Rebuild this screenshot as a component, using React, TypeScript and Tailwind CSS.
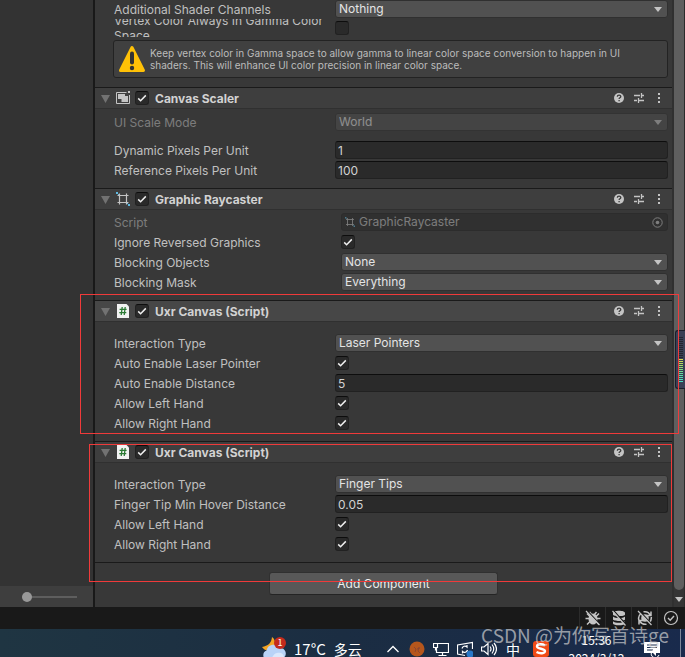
import React, { useId } from "react";

type RowProps = {
  label: string;
  indent?: boolean;
  disabled?: boolean;
  children: (id: string) => React.ReactNode;
};

function Row({ label, indent, disabled, children }: RowProps) {
  const id = useId();
  return (
    <div
      className={`grid h-[18px] items-center ${
        indent ? "grid-cols-[227px_1fr]" : "grid-cols-[221px_1fr]"
      } ${disabled ? "opacity-50" : ""}`}
    >
      <label htmlFor={id} className="pt-px whitespace-nowrap">
        {label}
      </label>
      {children(id)}
    </div>
  );
}

type FieldProps = {
  label: string;
  value: string;
  indent?: boolean;
  disabled?: boolean;
};

function SelectRow({ label, value, indent, disabled }: FieldProps) {
  return (
    <Row label={label} indent={indent} disabled={disabled}>
      {(id) => (
        <div className="relative">
          <select
            id={id}
            disabled={disabled}
            defaultValue={value}
            className="block h-[18px] w-full appearance-none rounded-[3px] border border-[#303030] bg-[#515151] pl-[3px] text-[12px] leading-4 text-[#e4e4e4] outline-none disabled:opacity-100"
          >
            <option>{value}</option>
          </select>
          <svg
            className="pointer-events-none absolute top-[7px] right-[6px]"
            width="8"
            height="5"
            viewBox="0 0 8 5"
          >
            <path d="M0 0h8L4 5z" fill="#c4c4c4" />
          </svg>
        </div>
      )}
    </Row>
  );
}

function TextRow({ label, value }: FieldProps) {
  return (
    <Row label={label}>
      {(id) => (
        <input
          id={id}
          type="text"
          defaultValue={value}
          className="block h-[18px] w-full min-w-0 rounded-[3px] border border-[#212121] border-t-[#0d0d0d] bg-[#2a2a2a] px-[2px] pt-px text-[12px] leading-4 text-[#d2d2d2] outline-none"
        />
      )}
    </Row>
  );
}

function Checkbox({ id, checked, label }: { id?: string; checked: boolean; label?: string }) {
  return (
    <span className="relative block size-[14px]">
      <input
        id={id}
        type="checkbox"
        aria-label={label}
        defaultChecked={checked}
        className="peer block size-[14px] appearance-none rounded-[3px] border border-[#212121] border-t-[#0d0d0d] bg-[#2a2a2a]"
      />
      <svg
        className="pointer-events-none absolute inset-0 hidden peer-checked:block"
        width="14"
        height="14"
        viewBox="0 0 14 14"
        fill="none"
      >
        <path d="M3.2 7.4l2.4 2.3 5.2-5.3" stroke="#eeeeee" strokeWidth="1.5" />
      </svg>
    </span>
  );
}

function CheckRow({ label, indent }: { label: string; indent?: boolean }) {
  return (
    <Row label={label} indent={indent}>
      {(id) => <Checkbox id={id} checked />}
    </Row>
  );
}

function ScalerIcon() {
  return (
    <svg width="14" height="14" viewBox="0 0 14 14">
      <path d="M10.500 1.500H.500v11h13V4" fill="none" stroke="#c4c4c4" />
      <path d="M2 3h7v2h3v6H5.500V8H2z" fill="#c4c4c4" />
      <path d="M12 0h2v2h-2z" fill="#c4c4c4" />
    </svg>
  );
}

function RaycasterIcon({ size = 14 }: { size?: number }) {
  return (
    <svg width={size} height={size} viewBox="0 0 14 14">
      <path
        d="M3.500 1.500v11M10.500 1.500v11M1.500 3.500h11M1.500 10.500h11"
        fill="none"
        stroke="#c4c4c4"
        strokeWidth="1.200"
      />
      <path d="M0 0h2v2H0zM2 2h1v1H2zM11 11h1v1h-1zM12 12h2v2h-2z" fill="#5fb9e0" />
    </svg>
  );
}

function ScriptIcon() {
  return (
    <svg width="14" height="14" viewBox="0 0 14 14">
      <path d="M1 0h9.500L13 2.500V14H1z" fill="#f2f2f2" />
      <path
        d="M6.200 3L5.200 11M9.200 3l-1 8M3.600 5.300h7M3.300 8.700h7"
        fill="none"
        stroke="#2b7a34"
        strokeWidth="1.300"
      />
    </svg>
  );
}

function HeaderTools() {
  return (
    <div className="ml-auto flex items-center gap-[6px] pr-[6px]">
      <button type="button" aria-label="Help" className="size-[14px]">
        <svg width="14" height="14" viewBox="0 0 14 14">
          <circle cx="7" cy="7" r="5" fill="#c4c4c4" />
          <path
            d="M5.300 5.800c0-2.300 3.500-2.200 3.500-.2 0 1.200-1.700 1.200-1.700 2.400M7.100 8.900v1.300"
            fill="none"
            stroke="#3a3a3a"
            strokeWidth="1.300"
          />
        </svg>
      </button>
      <button type="button" aria-label="Presets" className="size-[14px]">
        <svg width="14" height="14" viewBox="0 0 14 14">
          <path
            d="M2 4.500h6M10 4.500h2M9.500 2v5M2 9.500h3M7 9.500h5M6.500 7v5"
            fill="none"
            stroke="#c4c4c4"
            strokeWidth="1.300"
          />
        </svg>
      </button>
      <button type="button" aria-label="More options" className="size-[14px]">
        <svg width="14" height="14" viewBox="0 0 14 14">
          <path d="M6 2h2v2H6zM6 6h2v2H6zM6 10h2v2H6z" fill="#c4c4c4" />
        </svg>
      </button>
    </div>
  );
}

type SectionProps = {
  title: string;
  icon: React.ReactNode;
  bodyClass?: string;
  headerClass?: string;
  mark?: string;
  children: React.ReactNode;
};

function Section({
  title,
  icon,
  bodyClass = "pt-3",
  headerClass = "bg-[#3e3e3e]",
  mark,
  children,
}: SectionProps) {
  return (
    <section className="relative">
      <header
        className={`flex h-[22px] items-center border-t border-b border-t-[#1a1a1a] border-b-[#303030] pl-[6px] ${headerClass}`}
      >
        <button type="button" aria-label={`Collapse ${title}`} className="mr-[6px] pt-px">
          <svg width="9" height="8" viewBox="0 0 9 8">
            <path d="M0 0h9L4.500 8z" fill="#727272" />
          </svg>
        </button>
        {icon}
        <div className="ml-[5px]">
          <Checkbox checked label={`Enable ${title}`} />
        </div>
        <h2 className="ml-[6px] pt-px text-[12px] leading-4 font-bold text-[#d2d2d2]">{title}</h2>
        <HeaderTools />
      </header>
      <div className={`flex flex-col gap-[2px] pr-1 pb-[9px] pl-[19px] ${bodyClass}`}>
        {children}
      </div>
      {mark && <div className={`pointer-events-none absolute z-10 border border-[#f03a3a] ${mark}`} />}
    </section>
  );
}

function HierarchyPane() {
  return (
    <aside className="flex w-[95px] shrink-0 flex-col border-r-2 border-[#191919] bg-[#333333]">
      <div className="mt-auto flex h-[21px] items-center bg-[#3e3e3e] pl-[22px]">
        <input
          type="range"
          aria-label="Icon size"
          defaultValue={0}
          className="h-[10px] w-[55px] appearance-none bg-[linear-gradient(#5e5e5e,#5e5e5e)] bg-[length:100%_2px] bg-center bg-no-repeat [&::-webkit-slider-thumb]:size-[10px] [&::-webkit-slider-thumb]:appearance-none [&::-webkit-slider-thumb]:rounded-full [&::-webkit-slider-thumb]:bg-[#999999]"
        />
      </div>
    </aside>
  );
}

function Inspector() {
  return (
    <main className="min-w-0 flex-1 bg-[#383838] text-[12px] leading-4 text-[#c0c0c0]">
      <div className="flex flex-col pr-1 pb-[9px] pl-[19px]">
        <SelectRow label="Additional Shader Channels" value="Nothing" />
        <div className="mt-px grid h-[18px] grid-cols-[221px_1fr] grid-rows-[18px] items-center overflow-hidden">
          <label htmlFor="gamma" className="leading-[15px]">
            Vertex Color Always In Gamma Color Space
          </label>
          <Checkbox id="gamma" checked={false} />
        </div>
        <div className="-ml-px mt-[3px] flex h-[38px] items-center gap-1 rounded-[3px] border border-[#232323] bg-[#404040] pl-1">
          <svg className="shrink-0" width="28" height="28" viewBox="0 0 28 28">
            <path
              d="M14 2.500L25.500 25.500H2.500z"
              fill="#ffc107"
              stroke="#ffc107"
              strokeWidth="3"
              strokeLinejoin="round"
            />
            <path d="M14 8.500v9" stroke="#333333" strokeWidth="4" strokeLinecap="round" />
            <circle cx="14" cy="23" r="2.200" fill="#333333" />
          </svg>
          <p className="pr-7 text-[10px] leading-3 text-[#bcbcbc]">
            Keep vertex color in Gamma space to allow gamma to linear color space conversion to
            happen in UI shaders. This will enhance UI color precision in linear color space.
          </p>
        </div>
      </div>

      <Section title="Canvas Scaler" icon={<ScalerIcon />} bodyClass="pt-1">
        <SelectRow label="UI Scale Mode" value="World" disabled />
        <div className="h-[6px]" />
        <TextRow label="Dynamic Pixels Per Unit" value="1" />
        <TextRow label="Reference Pixels Per Unit" value="100" />
      </Section>

      <Section title="Graphic Raycaster" icon={<RaycasterIcon />} bodyClass="pt-[3px]">
        <Row label="Script" indent disabled>
          {(id) => (
            <button
              id={id}
              type="button"
              disabled
              className="flex h-[18px] items-center gap-1 rounded-[3px] border border-[#212121] bg-[#2a2a2a] pr-1 pl-[3px]"
            >
              <RaycasterIcon size={10} />
              <span>GraphicRaycaster</span>
              <svg className="ml-auto" width="11" height="11" viewBox="0 0 11 11">
                <circle cx="5.500" cy="5.500" r="4.700" fill="none" stroke="#c4c4c4" />
                <circle cx="5.500" cy="5.500" r="1.800" fill="#c4c4c4" />
              </svg>
            </button>
          )}
        </Row>
        <CheckRow label="Ignore Reversed Graphics" indent />
        <SelectRow label="Blocking Objects" value="None" indent />
        <SelectRow label="Blocking Mask" value="Everything" indent />
      </Section>

      <Section
        title="Uxr Canvas (Script)"
        icon={<ScriptIcon />}
        headerClass="bg-[#474747]"
        mark="-top-[6px] bottom-[7px] -left-[15px] -right-[7px]"
      >
        <SelectRow label="Interaction Type" value="Laser Pointers" />
        <CheckRow label="Auto Enable Laser Pointer" />
        <TextRow label="Auto Enable Distance" value="5" />
        <CheckRow label="Allow Left Hand" />
        <CheckRow label="Allow Right Hand" />
      </Section>

      <Section
        title="Uxr Canvas (Script)"
        icon={<ScriptIcon />}
        mark="top-[3px] -bottom-[20px] -left-[6px] right-0"
      >
        <SelectRow label="Interaction Type" value="Finger Tips" />
        <TextRow label="Finger Tip Min Hover Distance" value="0.05" />
        <CheckRow label="Allow Left Hand" />
        <CheckRow label="Allow Right Hand" />
      </Section>

      <div className="flex justify-center border-t border-[#1a1a1a] pt-[9px] pb-3">
        <button
          type="button"
          className="h-[23px] w-[229px] rounded-[3px] border border-[#303030] border-b-[#242424] bg-[#585858] text-[#eeeeee]"
        >
          Add Component
        </button>
      </div>
    </main>
  );
}

// yellow-green part of the level meter is the lit one
const meter = [
  "bg-[#22252f]", "bg-[#22252f]", "bg-[#22252f]", "bg-[#22252f]", "bg-[#22252f]", "bg-[#22252f]",
  "bg-[#22252f]", "bg-[#22252f]", "bg-[#22252f]", "bg-[#22252f]", "bg-[#22252f]",
  "bg-[#d8d850]", "bg-[#c4dc58]", "bg-[#b0dc60]", "bg-[#a0dc6c]", "bg-[#90dc78]", "bg-[#80dc84]",
  "bg-[#70dc90]", "bg-[#64dc9c]", "bg-[#5cdca8]", "bg-[#54dcb4]", "bg-[#50dcbc]", "bg-[#4cdcc0]",
];

function ScrollBar() {
  return (
    <div className="relative flex w-[13px] shrink-0 flex-col border-r border-l-2 border-r-[#2b2b2b] border-l-[#303030] bg-[#353535]">
      <div className="flex-1 rounded-b-full bg-[#5f5f5f]" />
      <button type="button" aria-label="Scroll down" className="flex h-[17px] justify-center pt-[7px]">
        <svg width="8" height="5" viewBox="0 0 8 5">
          <path d="M0 0h8L4 5z" fill="#c4c4c4" />
        </svg>
      </button>
      <div className="absolute top-[330px] -right-px flex h-[59px] w-[10px] flex-col gap-px rounded-l-[3px] border border-r-0 border-[#1c1f2b] bg-[#3a3f55] pt-[6px] pr-[2px] pl-[3px]">
        {meter.map((color, i) => (
          <span key={i} className={`h-px shrink-0 ${color}`} />
        ))}
      </div>
    </div>
  );
}

function StatusBar() {
  const cell = "flex w-[26px] items-center justify-center border-l border-[#2c2c2c]";
  return (
    <footer className="flex h-[22px] justify-end bg-[#191919] pr-[2px]">
      <button type="button" aria-label="Debugger" className={cell}>
        <svg width="16" height="16" viewBox="0 0 16 16">
          <ellipse cx="8" cy="9" rx="4.500" ry="5.500" fill="#c4c4c4" />
          <path
            d="M4.500 2l2.500 3M11.500 2L9 5M.500 8.500h15M2 3.500l3 3M14 3.500l-3 3M2 14.500l3-3M14 14.500l-3-3"
            stroke="#c4c4c4"
            strokeWidth="1.500"
          />
          <path d="M2.500 1l13 14" stroke="#191919" strokeWidth="1.200" />
          <path d="M1 1l13.500 14" stroke="#c4c4c4" strokeWidth="1.200" />
        </svg>
      </button>
      <button type="button" aria-label="Cache server" className={cell}>
        <svg width="16" height="16" viewBox="0 0 16 16">
          <path
            d="M2 3c0-3 12-3 12 0v1.500c0 2.200-12 2.200-12 0zM2 6.500c2 2.200 10 2.200 12 0v2.700c0 2.300-12 2.300-12 0zM2 11.200c2 2.200 10 2.200 12 0v2c0 2.800-12 2.800-12 0z"
            fill="#c4c4c4"
          />
          <path d="M3 1l12.500 14" stroke="#191919" strokeWidth="1.200" />
          <path d="M1.500 1l13 14.500" stroke="#c4c4c4" strokeWidth="1.200" />
        </svg>
      </button>
      <button type="button" aria-label="Auto lighting" className={cell}>
        <svg width="16" height="16" viewBox="0 0 16 16" fill="none">
          <path
            d="M2 10.500a6.300 6.300 0 0 1 2-7M6.500 1.800a6.500 6.500 0 0 1 7 3.700M14.300 7a6.500 6.500 0 0 1-2 5.500M9.500 14.200a6.500 6.500 0 0 1-6.500-2.700M14 1.500v4h-4M2 14.500v-4h4"
            stroke="#c4c4c4"
            strokeWidth="1.500"
          />
          <circle cx="8" cy="8" r="3.800" fill="#c4c4c4" />
          <path d="M2.500 1l13 14" stroke="#191919" strokeWidth="1.200" />
          <path d="M1 1l13.500 14" stroke="#c4c4c4" strokeWidth="1.200" />
        </svg>
      </button>
      <button type="button" aria-label="Background tasks" className={cell}>
        <svg width="16" height="16" viewBox="0 0 16 16" fill="none" stroke="#c4c4c4">
          <circle cx="8" cy="8" r="6.500" strokeWidth="1.200" />
          <path d="M5 8l2.200 2.200L11 6" strokeWidth="1.400" />
        </svg>
      </button>
    </footer>
  );
}

function TaskBar() {
  return (
    <div className="relative flex h-10 items-center justify-end bg-gradient-to-r from-[#1f3542] via-[#1b2d42] to-[#192a4c] pr-1 text-white">
      <svg width="24" height="26" viewBox="0 0 24 26" className="shrink-0">
        <path d="M10 1c-.5 6-4 9-10 10 4 6 12 4 13-3 .300-3-.800-5.500-3-7z" fill="#f5a623" />
        <path
          d="M5 24a5 5 0 0 1-.500-9.500A7.500 7.500 0 0 1 18 12a5.500 5.500 0 0 1 4 9.500c-.800 1.500-2 2.500-4 2.500z"
          fill="#b9d3f7"
        />
        <path d="M5 24c6 0 5-6 10-7s7 2 7 4.500c-.800 1.500-2 2.500-4 2.500z" fill="#dbe8fb" />
        <circle cx="18" cy="7" r="6" fill="#c42b1c" />
        <text x="18" y="10" textAnchor="middle" fontSize="9" fill="#ffffff">
          1
        </text>
      </svg>
      <div className="ml-2 flex w-[91px] gap-2 leading-5">
        <span className="text-[15px]">17°C</span>
        <span className="text-[14px]">多云</span>
      </div>
      <div className="flex shrink-0 items-center gap-2">
        <svg width="16" height="16" viewBox="0 0 16 16" fill="none">
          <path d="M2.500 11L8 5.500l5.500 5.500" stroke="#ffffff" strokeWidth="1.300" />
        </svg>
        <svg width="16" height="16" viewBox="0 0 16 16">
          <circle cx="8" cy="8" r="7.500" fill="#b5561c" />
          <path d="M5 6l2 2-1 3M10 6l-1 4 2 2M8 8l3-1" stroke="#8a4530" fill="none" />
        </svg>
        <svg width="16" height="16" viewBox="0 0 16 16" fill="none" stroke="#ffffff">
          <path
            d="M5 2.500h10.500v9H3.500V7M9.500 12v2.500M5.500 14.500h8M.500 2.500h4v4h-4zM2.500 6.500v3"
            strokeWidth="1.200"
          />
        </svg>
        <svg width="16" height="16" viewBox="0 0 16 16" fill="none" stroke="#ffffff">
          <path d="M8 14.500L.500 13V4l15-2.500V8" strokeWidth="1.200" />
          <path d="M5 7.500a3 3 0 0 1 5-1.500V4M10.500 9a3 3 0 0 1-5 1.500v2" strokeWidth="1.200" />
          <circle cx="13" cy="13" r="3.500" fill="#2878c8" stroke="none" />
        </svg>
        <svg width="16" height="16" viewBox="0 0 16 16" fill="none" stroke="#ffffff">
          <path
            d="M.500 6v4h2.500l4 3.500v-11L3 6zM9 5.500q2 2.500 0 5M11 3.500q3.500 4.500 0 9M13 2q5 6 0 12"
            strokeWidth="1.200"
          />
        </svg>
        <span className="w-4 text-center text-[14px] leading-4">中</span>
        <svg width="16" height="16" viewBox="0 0 16 16" className="ml-1">
          <rect width="16" height="16" rx="3" fill="#f04a16" />
          <path
            d="M12 4.500c-3-2-8-1.500-8 1s8 2 8 4.500-5 3-8.500 1"
            fill="none"
            stroke="#ffffff"
            strokeWidth="2.400"
          />
        </svg>
      </div>
      <div className="w-[95px] text-center text-[12px] leading-[18px]">
        <div>15:36</div>
        <div>2024/3/12</div>
      </div>
      <svg width="16" height="16" viewBox="0 0 16 16" className="shrink-0">
        <path d="M0 1h16v11h-4v3l-3-3H0z" fill="#ffffff" />
        <path d="M3 4h10M3 6.500h10M3 9h6" stroke="#1a2a48" />
        <path d="M10 9a4 4 0 1 0 5 5" fill="none" stroke="#ffffff" />
      </svg>
      <div className="ml-5 h-full border-l border-[#7c8699]" />
      <span className="pointer-events-none absolute -top-2 right-4 z-10 text-[19px] leading-7 whitespace-nowrap text-[#d0d0d0]/70">
        CSDN @为你写首诗ge
      </span>
    </div>
  );
}

export default function App() {
  return (
    <div className="h-screen overflow-hidden bg-[#191919] font-['Inter','Noto_Sans_CJK_SC',sans-serif]">
      <div className="flex">
        <HierarchyPane />
        <Inspector />
        <ScrollBar />
      </div>
      <StatusBar />
      <div className="font-['Noto_Sans_CJK_SC',sans-serif]">
        <TaskBar />
      </div>
    </div>
  );
}
